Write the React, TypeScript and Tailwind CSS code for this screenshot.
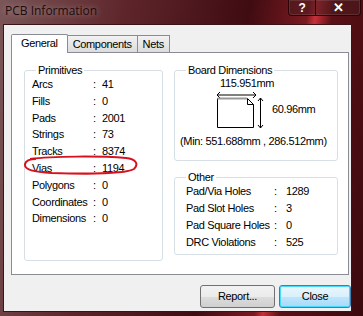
import { useState } from "react";

const primitives = [
  { label: "Arcs", value: "41" },
  { label: "Fills", value: "0" },
  { label: "Pads", value: "2001" },
  { label: "Strings", value: "73" },
  { label: "Tracks", value: "8374" },
  { label: "Vias", value: "1194" },
  { label: "Polygons", value: "0" },
  { label: "Coordinates", value: "0" },
  { label: "Dimensions", value: "0" },
];

const other = [
  { label: "Pad/Via Holes", value: "1289" },
  { label: "Pad Slot Holes", value: "3" },
  { label: "Pad Square Holes", value: "0" },
  { label: "DRC Violations", value: "525" },
];

const tabs = ["General", "Components", "Nets"];

function GroupBox({ title, className, children }: { title: string; className?: string; children: React.ReactNode }) {
  return (
    <fieldset className={`border border-[#d5dfe5] rounded-[3px] px-[7px] ${className ?? ""}`}>
      <legend className="ml-[4px] px-[2px] leading-[13px]">{title}</legend>
      {children}
    </fieldset>
  );
}

export default function App() {
  const [tab, setTab] = useState("General");

  return (
    <div
      className="w-[363px] h-[316px] flex flex-col overflow-hidden text-[11px] tracking-[-0.35px] text-black bg-[linear-gradient(100deg,#7a5658_0%,#5e262b_30%,#3f0c12_60%,#7a1a20_74%,#c8303a_76%,#5a1016_80%,#3a0a0e_100%)]"
      style={{ fontFamily: '"Liberation Sans", Arial, sans-serif' }}
    >
      {/* Title bar */}
      <div className="h-[24px] flex items-start shrink-0">
        <span
          className="pl-[5px] pt-[2px] text-[12px] tracking-normal text-[#1c0c0c] [text-shadow:0_0_6px_rgba(255,255,255,0.45)]"
          style={{ fontFamily: '"Open Sans", "Noto Sans", sans-serif' }}
        >
          PCB Information
        </span>
        <div className="ml-auto mr-[2px] flex border border-t-0 border-[#2a0508] rounded-b-[4px] overflow-hidden shadow-[inset_0_0_0_1px_rgba(255,255,255,0.25)]">
          <div className="w-[27px] h-[15px] flex items-center justify-center text-white font-bold text-[12px] border-r border-[#2a0508] bg-[#4a1a1e]/60">
            ?
          </div>
          <div className="w-[44px] h-[15px] flex items-center justify-center text-white font-bold text-[13px] bg-[#4a1a1e]/60">
            ✕
          </div>
        </div>
      </div>

      {/* Body */}
      <div className="flex-1 ml-[3px] mr-[11px] mb-[4px] border border-[#3a1416] bg-[#f0f0f0] flex flex-col pl-[7px] pr-[2px] pt-[8px]">
        {/* Tabs */}
        <div className="flex items-end h-[19px] relative z-10">
          {tabs.map((t) => {
            const active = t === tab;
            return (
              <button
                key={t}
                onClick={() => setTab(t)}
                className={
                  active
                    ? "h-[19px] px-[9px] bg-white border border-b-0 border-[#898c95] rounded-t-[2px] -mb-px pb-px"
                    : "h-[17px] px-[5px] bg-[linear-gradient(#f2f2f2,#dcdcdc)] border border-b-0 border-l-0 border-[#898c95] first:border-l"
                }
              >
                {t}
              </button>
            );
          })}
        </div>

        {/* Panel */}
        <div className="w-[338px] h-[223px] bg-white border border-[#898c95] flex gap-[11px] pl-[12px] pt-[11px]">
          {/* Primitives */}
          <GroupBox title="Primitives" className="w-[139px] h-[197px] relative">
            <div className="grid grid-cols-[61px_9px_1fr] leading-[16.8px] -mt-[1px]">
              {primitives.map((p) => (
                <div key={p.label} className="contents">
                  <span>{p.label}</span>
                  <span>:</span>
                  <span>{p.value}</span>
                </div>
              ))}
            </div>
            {/* red marker ellipse */}
            <svg className="absolute left-[-3px] top-[77px]" width="118" height="22" viewBox="0 0 118 22">
              <path
                d="M8 5 C30 2 80 2 104 4 C114 5 117 10 112 15 C104 20 60 20 30 19 C12 18 2 16 3 10 C4 6 8 5 14 5"
                fill="none"
                stroke="#d8121c"
                strokeWidth="2"
              />
            </svg>
          </GroupBox>

          <div className="flex flex-col gap-[10px]">
            {/* Board dimensions */}
            <GroupBox title="Board Dimensions" className="w-[164px] h-[97px]">
              <div className="flex flex-col items-start">
                <div className="ml-[38px] leading-[13px]">115.951mm</div>
                <div className="flex items-center ml-[34px] mt-[1px]">
                  <svg width="50" height="38" viewBox="0 0 50 38">
                    <path d="M1 4 H40 M1 4 L4 1 M1 4 L4 7 M40 4 L37 1 M40 4 L37 7" stroke="#000" fill="none" strokeWidth="1" />
                    <path d="M1.5 36.5 V7.5" stroke="#000" fill="none" />
                    <path d="M1.5 7.5 H31" stroke="#999" strokeWidth="2" fill="none" />
                    <path d="M31.5 7.5 V13.5 H37.5 L31.5 7.5 M37.5 13.5 V36.5 H1.5" stroke="#000" fill="none" />
                    <path d="M44.5 7 V37 M44.5 7 L42 10 M44.5 7 L47 10 M44.5 37 L42 34 M44.5 37 L47 34" stroke="#000" fill="none" />
                  </svg>
                  <span className="ml-[6px] mt-[-2px]">60.96mm</span>
                </div>
                <div className="-ml-[2px] mt-[6px] leading-[13px] whitespace-nowrap">(Min: 551.688mm , 286.512mm)</div>
              </div>
            </GroupBox>

            {/* Other */}
            <GroupBox title="Other" className="w-[164px] h-[84px]">
              <div className="grid grid-cols-[88px_12px_1fr] leading-[17px] pl-[4px] -mt-[1px]">
                {other.map((o) => (
                  <div key={o.label} className="contents">
                    <span className="whitespace-nowrap">{o.label}</span>
                    <span>:</span>
                    <span>{o.value}</span>
                  </div>
                ))}
              </div>
            </GroupBox>
          </div>
        </div>

        {/* Buttons */}
        <div className="flex justify-end gap-[4px] mt-[10px] mr-[-2px]">
          <button className="w-[75px] h-[23px] rounded-[3px] border border-[#707070] bg-[linear-gradient(#f2f2f2_0%,#ebebeb_50%,#dddddd_51%,#cfcfcf_100%)]">
            Report...
          </button>
          <button className="w-[72px] h-[23px] rounded-[3px] border border-[#3c7fb1] shadow-[inset_0_0_0_1px_#48d8fb] bg-[linear-gradient(#eaf6fd_0%,#d9f0fc_50%,#bee6fd_51%,#a7d9f5_100%)]">
            Close
          </button>
        </div>
      </div>
    </div>
  );
}
